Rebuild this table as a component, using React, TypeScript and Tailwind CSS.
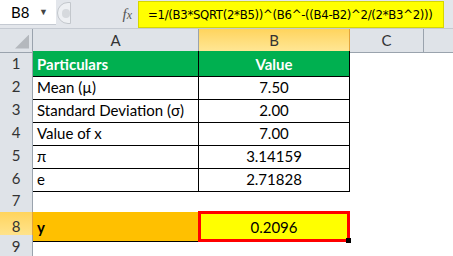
import React from "react";

const font = { fontFamily: "Lato, 'Liberation Sans', sans-serif" };

type Cell = { text?: string; cls?: string; txt?: string };

const rows: { n: number; a: Cell; b: Cell; sel?: boolean }[] = [
  {
    n: 1,
    a: { text: "Particulars", cls: "bg-[#00b050] border-r-black border-b-black", txt: "font-bold text-white" },
    b: { text: "Value", cls: "bg-[#00b050] border-r-black border-b-black justify-center", txt: "font-bold text-white" },
  },
  { n: 2, a: { text: "Mean (µ)", cls: "border-r-black border-b-black" }, b: { text: "7.50", cls: "border-r-black border-b-black justify-center" } },
  { n: 3, a: { text: "Standard Deviation (σ)", cls: "border-r-black border-b-black" }, b: { text: "2.00", cls: "border-r-black border-b-black justify-center" } },
  { n: 4, a: { text: "Value of x", cls: "border-r-black border-b-black" }, b: { text: "7.00", cls: "border-r-black border-b-black justify-center" } },
  { n: 5, a: { text: "π", cls: "border-r-black border-b-black" }, b: { text: "3.14159", cls: "border-r-black border-b-black justify-center" } },
  { n: 6, a: { text: "e", cls: "border-r-black border-b-black" }, b: { text: "2.71828", cls: "border-r-black border-b-black justify-center" } },
  { n: 7, a: { cls: "border-b-black" }, b: {} },
  { n: 8, sel: true, a: { text: "y", cls: "bg-[#ffc000] border-b-black", txt: "font-bold" }, b: {} },
  { n: 9, a: {}, b: {} },
];

function SelectedValue() {
  return (
    <div className="relative flex items-center justify-center border-[3px] border-[#ff0000] bg-[#ffff00] -mt-px -ml-px">
      <span className="pt-[2px] text-[15px] text-black">0.2096</span>
      <div className="absolute -bottom-[4px] -right-[4px] h-[5px] w-[5px] bg-black" />
    </div>
  );
}

export default function App() {
  return (
    <div className="h-[256px] w-[453px] overflow-hidden bg-white" style={font}>
      {/* formula bar */}
      <div className="flex h-[29px] items-start bg-[#e3e6eb] border-b border-[#c5cad2]">
        <div className="flex h-[25px] w-[56px] items-center justify-between bg-white pl-[11px] pr-[8px] text-[15px] text-black border-b border-[#c5cad2]">
          <span>B8</span>
          <span className="text-[9px] text-[#444]">▼</span>
        </div>
        <div className="ml-px mt-[2px] flex h-[22px] w-[14px] items-center rounded-l-full border border-[#c3c7cc] bg-[#eef0f3] pl-[4px]">
          <div className="h-[9px] w-[9px] rounded-full bg-[#d6d9dd]" />
        </div>
        <div className="flex-1" />
        <span className="mr-[6px] mt-[3px] italic text-[15px] text-[#555]" style={{ fontFamily: "'Liberation Serif', serif" }}>
          f<span className="text-[12px]">x</span>
        </span>
        <div
          className="mt-px flex h-[27px] w-[306px] items-center overflow-hidden whitespace-nowrap border border-[#d6d600] bg-[#ffff00] pl-[9px] text-[13px] tracking-[-0.3px] text-black"
          style={{ fontFamily: "'DejaVu Sans Condensed', 'Liberation Sans Narrow', Lato, sans-serif" }}
        >
          =1/(B3*SQRT(2*B5))^(B6^-((B4-B2)^2/(2*B3^2)))
        </div>
        <div className="w-[9px]" />
      </div>

      {/* column headers */}
      <div className="grid h-[22px] grid-cols-[33px_166px_151px_74px_1fr] text-[15px] text-[#333]">
        <div className="relative border-r border-b border-[#9aa3ad] bg-[#dfe3e8]">
          <div
            className="absolute bottom-[3px] right-[3px] h-[14px] w-[14px] bg-[#b4b8bd]"
            style={{ clipPath: "polygon(100% 0, 100% 100%, 0 100%)" }}
          />
        </div>
        <div className="flex items-center justify-center border-r border-b border-[#9aa3ad] bg-[#dfe3e8]">A</div>
        <div className="flex items-center justify-center border-r border-b border-[#e2a33b] bg-gradient-to-b from-[#ffd45c] to-[#ffe796]">B</div>
        <div className="flex items-center justify-center border-r border-b border-[#9aa3ad] bg-[#dfe3e8]">C</div>
        <div className="border-b border-[#9aa3ad] bg-[#dfe3e8]" />
      </div>

      {/* rows */}
      {rows.map((r) => (
        <div key={r.n} className="grid h-[23px] grid-cols-[33px_166px_151px_74px_1fr] text-[15px] text-black">
          <div
            className={
              r.sel
                ? "flex items-center justify-center border-r border-b border-[#e2a33b] bg-gradient-to-b from-[#ffd45c] to-[#ffe796] text-[#333]"
                : "flex items-center justify-center border-r border-b border-r-[#9aa3ad] border-b-[#c8ccd2] bg-[#dfe3e8] text-[#333]"
            }
          >
            {r.n}
          </div>
          <div className={`flex items-center border-r border-b border-transparent pl-[4px] pt-[2px] ${r.a.cls ?? ""}`}>
            <span className={r.a.txt}>{r.a.text}</span>
          </div>
          {r.sel ? (
            <SelectedValue />
          ) : (
            <div className={`flex items-center border-r border-b border-transparent pt-[2px] ${r.b.cls ?? ""}`}>
              <span className={r.b.txt}>{r.b.text}</span>
            </div>
          )}
          <div />
          <div />
        </div>
      ))}
    </div>
  );
}
